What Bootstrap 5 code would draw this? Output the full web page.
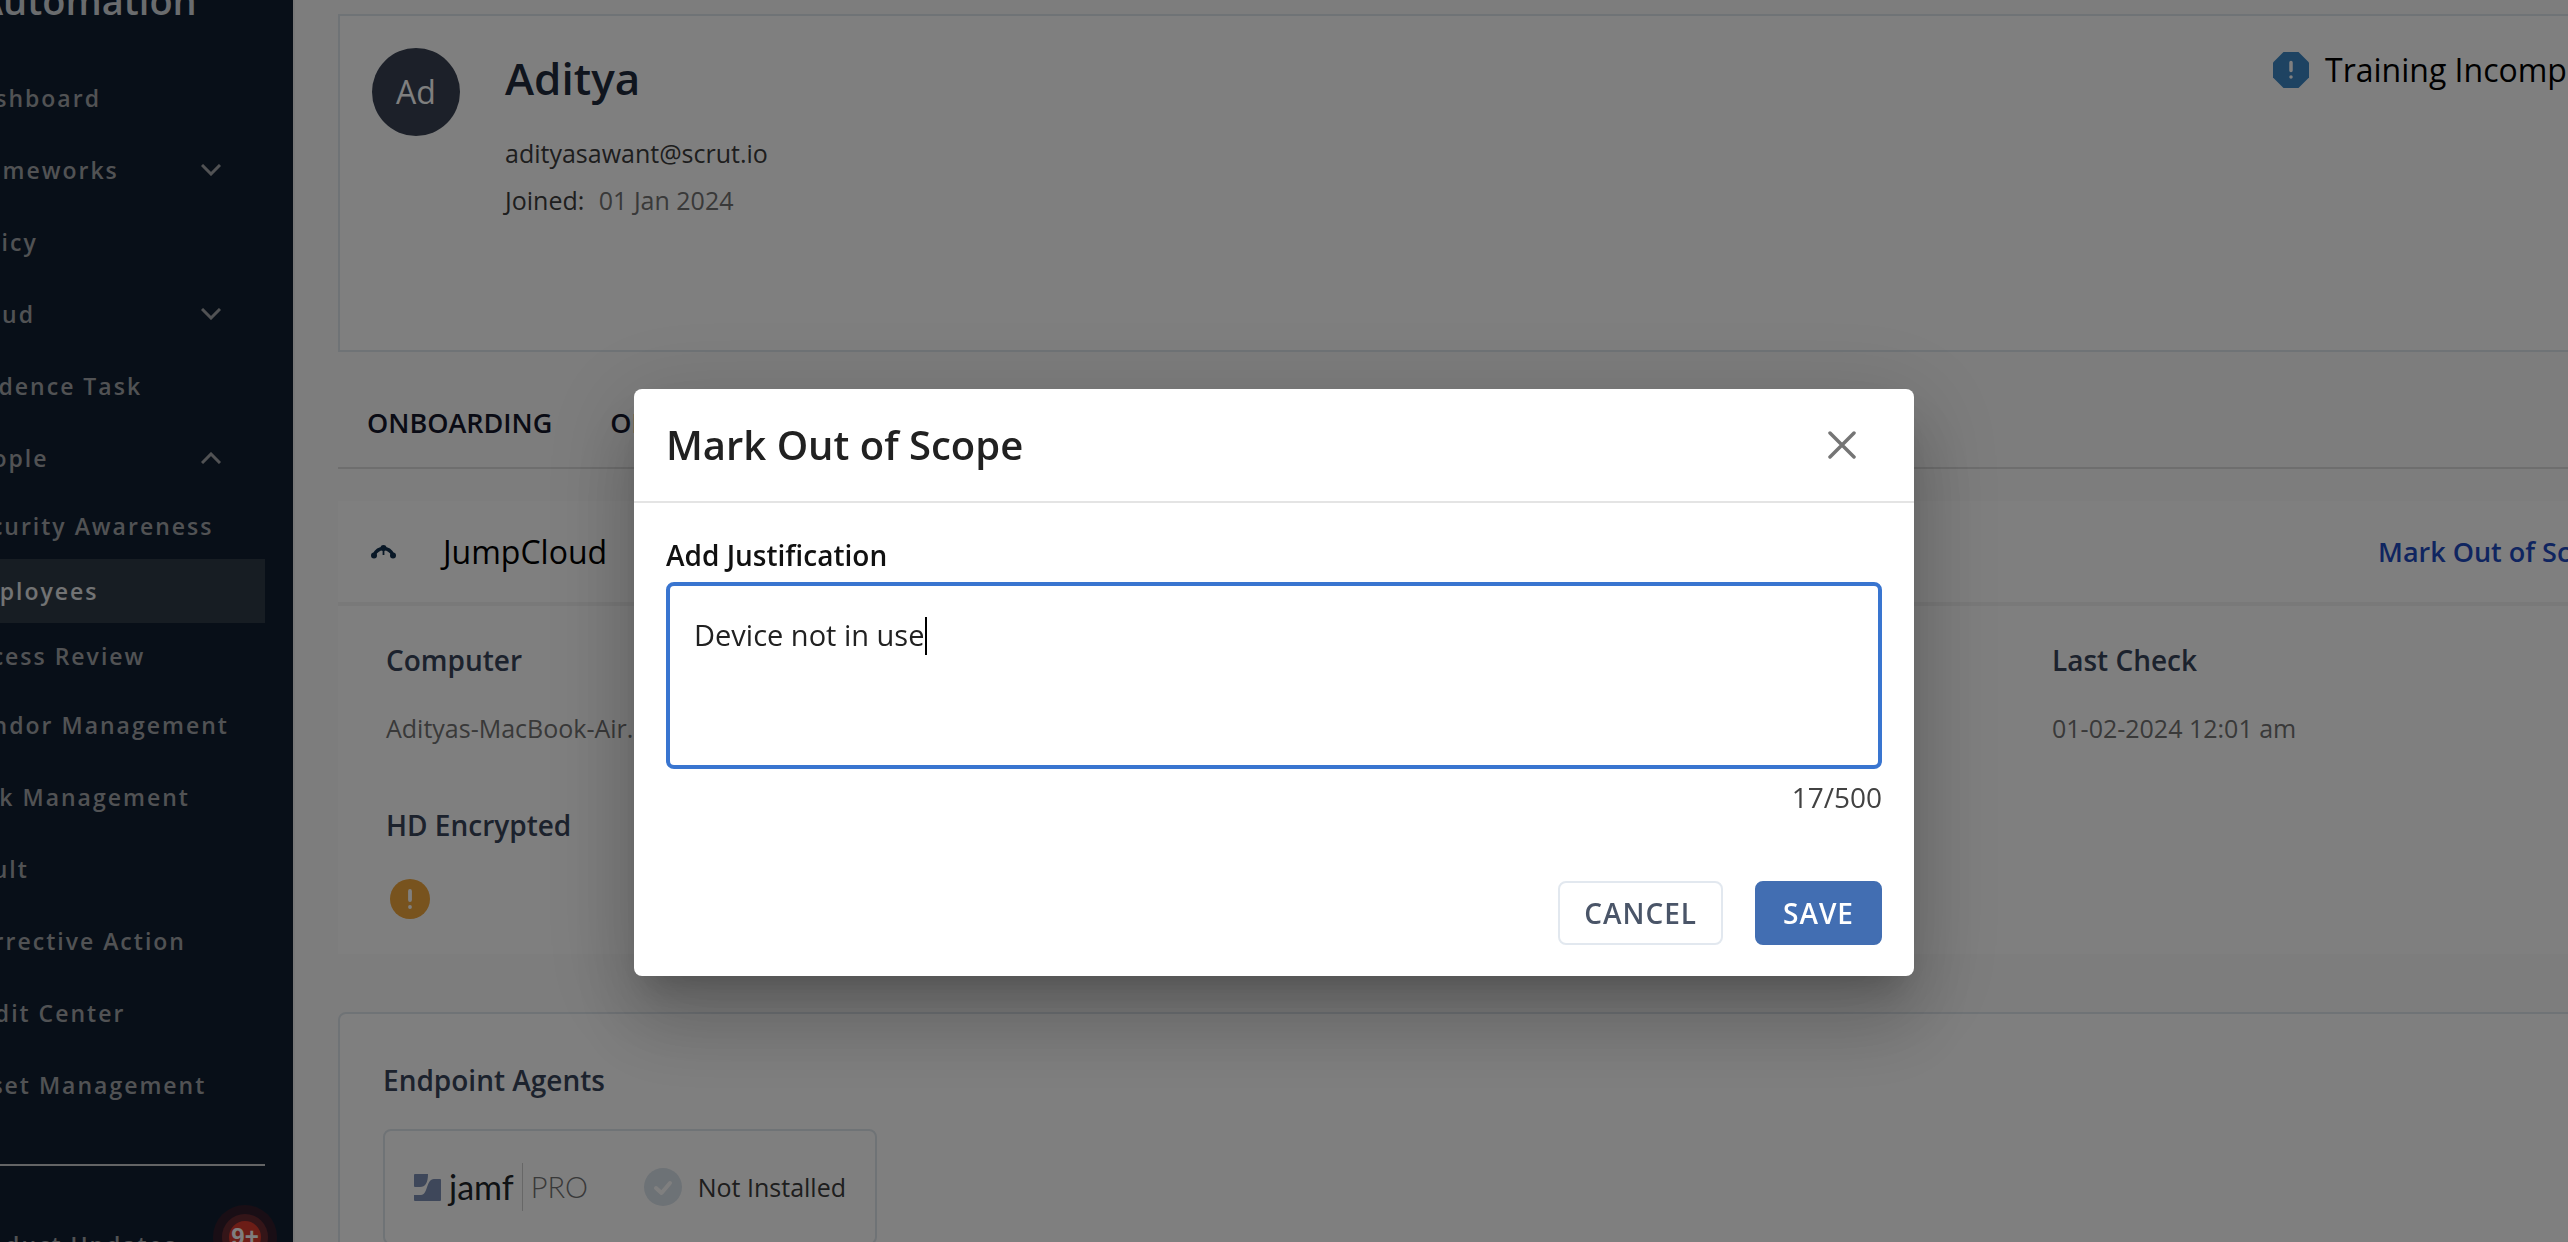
<!DOCTYPE html>
<html lang="en">
<head>
<meta charset="utf-8">
<meta name="viewport" content="width=device-width, initial-scale=1">
<title>Employees - Mark Out of Scope</title>
<link rel="stylesheet" href="https://cdn.jsdelivr.net/npm/bootstrap@5.3.0/dist/css/bootstrap.min.css">
<style>
  body { font-family: "Open Sans", sans-serif; font-size: 25px; line-height: 36px; background: #fbfbfb; color: #3c3c3c; }
  .app-shell { margin-left: -120px; margin-right: -140px; }
  .side { width: 415px; background: #101f31; border-right: 2px solid #f0f0f0; padding: 0 28px 0 0; }
  .brand { height: 62px; padding-left: 98px; font-size: 38px; line-height: 40px; margin-top: -20px; margin-bottom: 20px; font-weight: 600; color: #d4d8dd; }
  .side .nav-link { height: 72px; padding: 0 44px 0 81px; font-size: 23px; font-weight: 600; letter-spacing: 2px; color: #a3a5a8; }
  .side .subnav { gap: 1px; padding-bottom: 1px; }
  .side .subnav .nav-link { height: 64px; }
  .side .nav-link.active { background: #2f3b46; color: #e4e6e8; }
  .side-rule { height: 2px; background: #c6c8ca; margin: 43px 0 47px; }
  .news-text { padding-top: 14px; white-space: nowrap; }
  .news-badge { width: 32px; height: 32px; margin-right: -40px; border-radius: 50%; background: #d83a2c; box-shadow: 0 0 0 7px #692a31, 0 0 0 16px #321d2b; color: #fff; font: 700 24px "Liberation Sans", sans-serif; letter-spacing: 0; }
  .content-area { padding: 14px 0 0 43px; min-width: 0; }
  .panel { background: #fff; border: 2px solid #dfe6ec; }
  .profile { height: 338px; padding: 32px 0 0 32px; gap: 45px; }
  .avatar { width: 88px; height: 88px; background: #384152; color: #fff; font-size: 32px; }
  .person { font-size: 44px; line-height: 60px; font-weight: 600; color: #202a3c; margin-bottom: 22px; }
  .person-line { line-height: 47px; }
  .dim { color: #727272; }
  .big { font-size: 32px; line-height: 44px; color: #000; }
  .training { width: 433px; gap: 16px; }
  .section-tabs { height: 117px; padding: 26px 0 0 29px; gap: 58px; border-bottom: 2px solid #dcdcdc; margin-bottom: 32px; align-items: center; }
  .section-tabs a { font-size: 27px; font-weight: 600; color: #14172b; text-decoration: none; }
  .device { background: #fff; margin-bottom: 58px; }
  .device-head { height: 105px; border-bottom: 4px solid #f2f2f2; padding-left: 33px; gap: 47px; }
  .scope-link { width: 330px; font-size: 27px; font-weight: 600; color: #1f4bc0; text-decoration: none; }
  .device-body { padding: 36px 0 35px 48px; }
  .device-body dl > div { flex: 0 0 1666px; }
  .field { font-size: 28px; line-height: 36px; font-weight: 600; color: #39455a; margin: 0 0 32px; }
  .device-body dd { margin: 0 0 61px; }
  .field-icon { display: block; margin: 36px 0 0 4px; }
  .agents { padding: 48px 43px; border-radius: 8px; }
  .agent-card { width: 494px; height: 116px; border-radius: 8px; padding: 0 29px; margin-top: 31px; }
  .agent-rule { height: 48px; }
  .jamf-name { font-family: Lato, sans-serif; font-size: 34px; }
  .jamf-edition { font-family: Lato, sans-serif; font-size: 29px; font-weight: 300; }
  .shade { background: rgba(0,0,0,.5); padding-right: 20px; overflow: hidden; }
  .modal-dialog.scope { max-width: 1280px; margin-top: 389px; margin-bottom: 0; }
  .scope .modal-content { border: 0; border-radius: 8px; color: #212121; box-shadow: 0 22px 30px -14px rgba(0,0,0,.2), 0 48px 76px 6px rgba(0,0,0,.14), 0 18px 92px 16px rgba(0,0,0,.12); }
  .scope .modal-header { height: 114px; padding: 0 58px 0 32px; border-bottom: 2px solid #e4e4e4; }
  .scope .modal-title { font-size: 40px; line-height: 56px; font-weight: 600; }
  .shut { border: 0; background: none; padding: 0; line-height: 0; }
  .scope .modal-body { padding: 33px 32px 0; font-size: 28px; line-height: 38px; }
  .scope label { font-weight: 600; color: #111; margin-bottom: 8px; }
  .scope textarea { height: 187px; border: 4px solid #3975d0; border-radius: 8px; padding: 30px 24px; font-size: 29px; line-height: 38px; color: #212121; resize: none; }
  .caret { position: absolute; left: 259px; top: 35px; width: 2px; height: 38px; background: #000; }
  .counter { margin-top: 9px; color: #424242; }
  .scope .modal-footer { padding: 65px 32px 31px; border: 0; gap: 32px; }
  .scope .modal-footer .btn { height: 64px; margin: 0; padding: 0 24px; border: 2px solid #e2e8ef; border-radius: 8px; font-size: 28px; font-weight: 600; letter-spacing: 1px; color: #4a5568; }
  .scope .modal-footer .btn-primary { background: #426eb2; border-color: #426eb2; color: #fff; padding: 0 26px; }
</style>
<script src="https://cdn.jsdelivr.net/npm/bootstrap@5.3.0/dist/js/bootstrap.bundle.min.js"></script>
</head>
<body class="overflow-hidden">
<div class="app-shell d-flex vh-100 overflow-hidden">
  <nav class="side flex-shrink-0" aria-label="Main">
    <div class="brand">Automation</div>
    <div class="nav flex-column flex-nowrap">
      <a class="nav-link d-flex align-items-center" href="#">Dashboard</a>
      <a class="nav-link d-flex align-items-center justify-content-between" href="#">Frameworks <svg width="20" height="12" viewBox="0 0 20 12" fill="none" stroke="currentColor" stroke-width="3"><path d="M1 1l9 9 9-9"/></svg></a>
      <a class="nav-link d-flex align-items-center" href="#">Policy</a>
      <a class="nav-link d-flex align-items-center justify-content-between" href="#">Cloud <svg width="20" height="12" viewBox="0 0 20 12" fill="none" stroke="currentColor" stroke-width="3"><path d="M1 1l9 9 9-9"/></svg></a>
      <a class="nav-link d-flex align-items-center" href="#">Evidence Task</a>
      <a class="nav-link d-flex align-items-center justify-content-between" href="#">People <svg width="20" height="12" viewBox="0 0 20 12" fill="none" stroke="currentColor" stroke-width="3"><path d="M1 11l9-9 9 9"/></svg></a>
      <div class="subnav d-flex flex-column">
        <a class="nav-link d-flex align-items-center pe-0" href="#">Security Awareness</a>
        <a class="nav-link active d-flex align-items-center" href="#">Employees</a>
        <a class="nav-link d-flex align-items-center" href="#">Access Review</a>
      </div>
      <a class="nav-link d-flex align-items-center pe-0" href="#">Vendor Management</a>
      <a class="nav-link d-flex align-items-center" href="#">Risk Management</a>
      <a class="nav-link d-flex align-items-center" href="#">Vault</a>
      <a class="nav-link d-flex align-items-center" href="#">Corrective Action</a>
      <a class="nav-link d-flex align-items-center" href="#">Audit Center</a>
      <a class="nav-link d-flex align-items-center" href="#">Asset Management</a>
      <div class="side-rule"></div>
      <a class="nav-link d-flex align-items-start justify-content-between" href="#"><span class="news-text">Product Updates</span><span class="news-badge d-flex align-items-center justify-content-center flex-shrink-0 mt-2">9+</span></a>
    </div>
  </nav>

  <main class="content-area flex-grow-1">
    <section class="panel profile d-flex align-items-start">
      <div class="avatar rounded-circle d-flex align-items-center justify-content-center flex-shrink-0">Ad</div>
      <div class="flex-grow-1">
        <h1 class="person">Aditya</h1>
        <div class="person-line">adityasawant@scrut.io</div>
        <div class="person-line">Joined: <span class="dim ms-2">01 Jan 2024</span></div>
      </div>
      <div class="training big d-flex align-items-center text-nowrap">
        <svg width="36" height="36" viewBox="0 0 36 36"><path fill="#3c86c4" d="M10.500 0h15L36 10.500v15L25.500 36h-15L0 25.500v-15z"/><path stroke="#fff" stroke-width="3.500" stroke-linecap="round" d="M18 10.500v8M18 24.900v.2"/></svg>
        Training Incomplete
      </div>
    </section>

    <nav class="section-tabs d-flex" aria-label="Employee sections">
      <a href="#">ONBOARDING</a>
      <a href="#">OFFBOARDING</a>
    </nav>

    <section class="device">
      <header class="device-head d-flex align-items-center">
        <svg width="25" height="14" viewBox="0 0 25 14" fill="#12304e"><circle cx="12.500" cy="3" r="3"/><path fill="none" stroke="#12304e" stroke-width="3.500" d="M3 10C5 6 8 3.500 12.500 3.500S20 6 22 10"/><path d="M11.600 4h1.800v6h-1.800z"/><circle cx="3" cy="10.500" r="3"/><circle cx="22" cy="10.500" r="3"/></svg>
        <h2 class="big fw-normal mb-0 flex-grow-1">JumpCloud</h2>
        <a class="scope-link text-nowrap" href="#">Mark Out of Scope</a>
      </header>
      <div class="device-body">
        <dl class="d-flex mb-0">
          <div><dt class="field">Computer</dt><dd class="dim">Adityas-MacBook-Air.local</dd></div>
          <div><dt class="field">Last Check</dt><dd class="dim">01-02-2024 12:01 am</dd></div>
        </dl>
        <h3 class="field mb-0">HD Encrypted</h3>
        <svg class="field-icon" width="40" height="40" viewBox="0 0 40 40" role="img" aria-label="Not encrypted"><circle cx="20" cy="20" r="20" fill="#f0a63c"/><path stroke="#fff" stroke-width="3.800" stroke-linecap="round" d="M20 12v9M20 27.900v.2"/></svg>
      </div>
    </section>

    <section class="panel agents">
      <h3 class="field mb-0">Endpoint Agents</h3>
      <div class="agent-card panel d-flex align-items-center">
        <svg width="27" height="27" viewBox="0 0 27 27" fill="#7c8fb4" class="me-2"><path d="M1 0h13q0 13-8 13H1q-1 0-1-1V1q0-1 1-1zM20 5h6q1 0 1 1v20q0 1-1 1H1q-1 0-1-1v-5h7c7 0 5-16 13-16z"/></svg>
        <span class="jamf-name text-body">jamf</span>
        <span class="vr agent-rule mx-2 my-auto"></span>
        <span class="jamf-edition dim">PRO</span>
        <svg class="ms-auto me-3" width="38" height="38" viewBox="0 0 38 38"><circle cx="19" cy="19" r="19" fill="#dbe4ec"/><path fill="none" stroke="#fff" stroke-width="4" stroke-linecap="round" stroke-linejoin="round" d="M12 20l5.500 5L26 15"/></svg>
        <span>Not Installed</span>
      </div>
    </section>
  </main>
</div>

<div class="modal shade d-block" role="dialog" aria-modal="true" aria-labelledby="scopeTitle">
  <div class="modal-dialog scope">
    <form class="modal-content">
      <div class="modal-header">
        <h2 class="modal-title" id="scopeTitle">Mark Out of Scope</h2>
        <button type="button" class="shut" aria-label="Close"><svg width="28" height="28" viewBox="0 0 28 28" stroke="#757575" stroke-width="3.500" stroke-linecap="round"><path d="M2 2l24 24M26 2L2 26"/></svg></button>
      </div>
      <div class="modal-body">
        <label class="d-block" for="why">Add Justification</label>
        <div class="position-relative">
          <textarea class="form-control d-block shadow-none" id="why" maxlength="500" spellcheck="false">Device not in use</textarea>
          <span class="caret"></span>
        </div>
        <div class="counter text-end">17/500</div>
      </div>
      <div class="modal-footer">
        <button type="button" class="btn">CANCEL</button>
        <button type="button" class="btn btn-primary">SAVE</button>
      </div>
    </form>
  </div>
</div>
</body>
</html>
